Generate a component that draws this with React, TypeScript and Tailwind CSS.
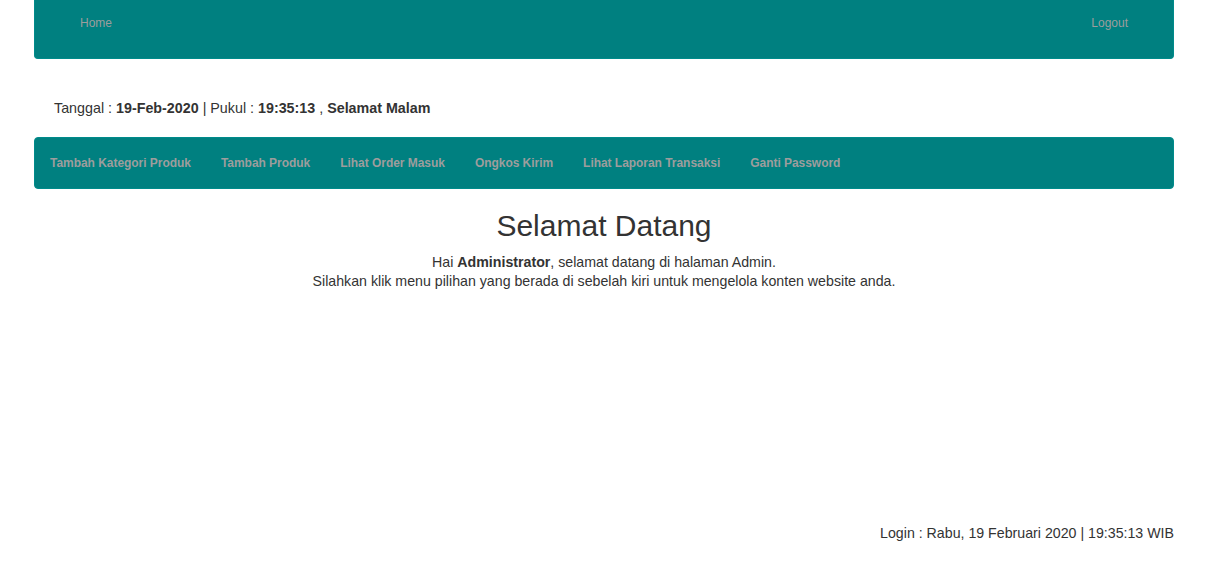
export default function App() {
  const menu = [
    'Tambah Kategori Produk',
    'Tambah Produk',
    'Lihat Order Masuk',
    'Ongkos Kirim',
    'Lihat Laporan Transaksi',
    'Ganti Password',
  ];

  return (
    <div className="min-h-[570px] bg-white text-[#333] font-['Liberation_Sans',Arial,sans-serif]">
      <div className="ml-[34px] w-[1140px]">
        {/* top navbar */}
        <div className="flex h-[59px] items-start justify-between rounded-b-[4px] border border-t-0 border-[#008b8b] bg-[#008080] px-[45px] pt-[15px] text-[12px] leading-[16px] text-[#9d9d9d]">
          <span>Home</span>
          <span>Logout</span>
        </div>

        {/* date line */}
        <div className="mt-[39px] pl-[20px] text-[14.3px] leading-[20px]">
          Tanggal : <b>19-Feb-2020</b> | Pukul : <b>19:35:13</b> , <b>Selamat Malam</b>
        </div>

        {/* menu bar */}
        <div className="mt-[19px] flex h-[52px] items-center rounded-[4px] border border-[#008b8b] bg-[#008080] text-[12px] font-bold tracking-[-0.04px] text-[#9d9d9d]">
          {menu.map((m) => (
            <span key={m} className="px-[15px]">
              {m}
            </span>
          ))}
        </div>

        {/* content */}
        <div className="mt-[20px] text-center">
          <h1 className="text-[30px] leading-[33px]">Selamat Datang</h1>
          <p className="mt-[11px] text-[14.2px] leading-[19px]">
            Hai <b>Administrator</b>, selamat datang di halaman Admin.
            <br />
            Silahkan klik menu pilihan yang berada di sebelah kiri untuk mengelola konten website anda.
          </p>
        </div>

        <div className="mt-[232px] text-right text-[14.2px] leading-[20px]">
          Login : Rabu, 19 Februari 2020 | 19:35:13 WIB
        </div>
      </div>
    </div>
  );
}
